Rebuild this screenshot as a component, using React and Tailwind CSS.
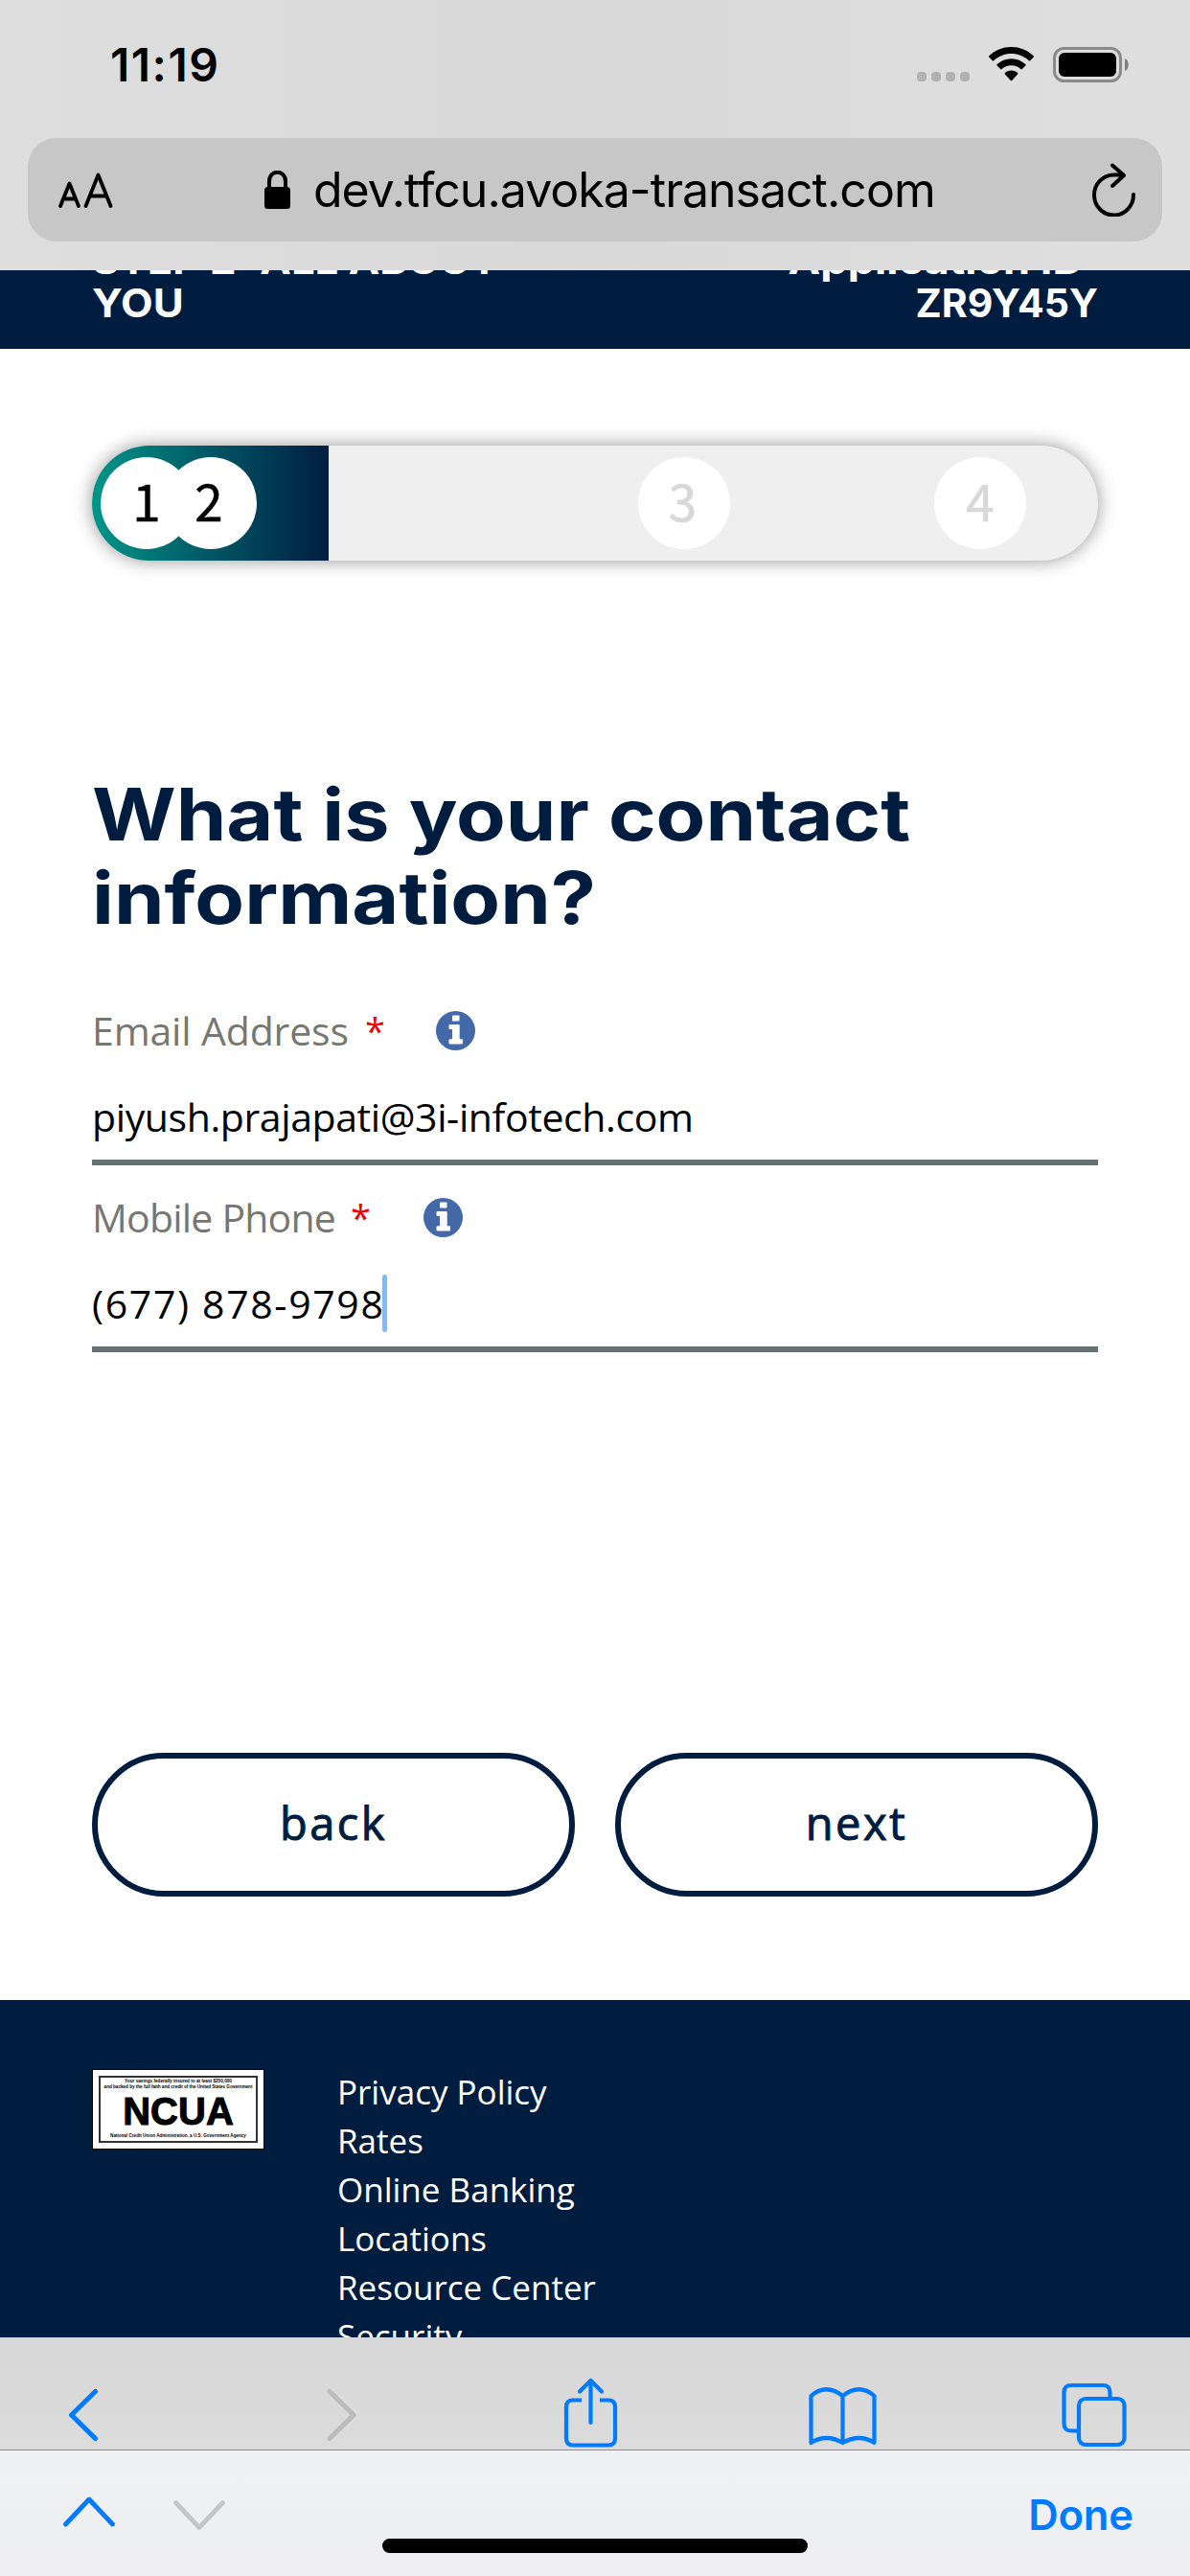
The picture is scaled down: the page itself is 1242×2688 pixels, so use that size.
const links = ["Privacy Policy", "Rates", "Online Banking", "Locations", "Resource Center", "Security"];

function StatusBar() {
  return (
    <div className="flex h-[144px] items-start justify-between pl-[115px] pr-[63px]">
      <div className="mt-[38px] text-[48px] leading-[60px] font-semibold tracking-[1.5px]">11:19</div>
      <div className="mt-[49px] flex h-[37px] items-start">
        <div className="mt-[26px] mr-[20px] flex gap-[5px]">
          {[0, 1, 2, 3].map((i) => (
            <span key={i} className="h-[10px] w-[10px] rounded-[4px] bg-[#b1b1b1]" />
          ))}
        </div>
        <svg className="mr-[20px] h-[36px] w-[47px]" viewBox="0 0 47 36">
          <path d="M23.5 0C32.5 0 40.5 3.4 46.6 9.2a1 1 0 0 1 0 1.5l-3.4 3.5a1 1 0 0 1-1.4 0C36.900 9.700 30.500 7 23.500 7S10.100 9.700 5.200 14.200a1 1 0 0 1-1.400 0L.4 10.700a1 1 0 0 1 0-1.500C6.500 3.400 14.500 0 23.500 0z" />
          <path d="M23.500 12.300c5.700 0 10.900 2.200 14.800 5.800a1 1 0 0 1 0 1.500l-3.500 3.500a1 1 0 0 1-1.400 0c-2.600-2.400-6.100-3.800-9.900-3.800s-7.300 1.400-9.900 3.800a1 1 0 0 1-1.400 0l-3.500-3.500a1 1 0 0 1 0-1.500c3.900-3.600 9.100-5.800 14.800-5.800z" />
          <path d="M23.500 24.600c2.500 0 4.700.9 6.500 2.300a1 1 0 0 1 .1 1.500l-5.900 6.700a1 1 0 0 1-1.400 0l-5.900-6.700a1 1 0 0 1 .1-1.500c1.800-1.400 4-2.300 6.500-2.300z" />
        </svg>
        <svg className="h-[37px] w-[80px]" viewBox="0 0 80 37">
          <rect x="1.500" y="1.500" width="69" height="34" rx="10" fill="none" stroke="#8a8a8a" strokeWidth="3" />
          <rect x="6" y="6" width="60" height="25" rx="6" />
          <path d="M75 12c5 2 5 11 0 13z" fill="#808080" />
        </svg>
      </div>
    </div>
  );
}

function AddressBar() {
  return (
    <div className="mx-[29px] flex h-[108px] items-center rounded-[30px] bg-[#c7c7c7] pl-[31px] pr-[27px]">
      <svg className="h-[40px] w-[60px]" viewBox="0 0 60 40" fill="none" stroke="#000" strokeWidth="3.800" strokeLinecap="round" strokeLinejoin="round">
        <path d="M3 37L12.500 13.500L22 37M6 29.500H19M29.500 37L42.500 4.500L55.500 37M34 26.500H51" />
      </svg>
      <svg className="ml-[156px] h-[40px] w-[28px]" viewBox="0 0 28 40">
        <rect y="17" width="27" height="23" rx="3.500" />
        <path d="M5 19V11.500C5 -1.500 22 -1.500 22 11.500V19" fill="none" stroke="#000" strokeWidth="4" />
      </svg>
      <div className="ml-[23px] w-[670px] text-[50px] leading-[60px] whitespace-nowrap tracking-[-1px]">dev.tfcu.avoka-transact.com</div>
      <svg className="ml-auto h-[56px] w-[46px]" viewBox="0 0 46 56" fill="none" stroke="#000" strokeWidth="4" strokeLinecap="round" strokeLinejoin="round">
        <path d="M43 33A20.500 21 0 1 1 22.500 12.500H32M21 2.500L33 13L21 24" />
      </svg>
    </div>
  );
}

function Step({ n, className }) {
  return (
    <div className={"flex h-[96px] w-[96px] items-center justify-center rounded-full bg-white text-[53px] leading-[60px] " + className}>
      <span className="mt-[-8px]">{n}</span>
    </div>
  );
}

function Progress() {
  return (
    <div className="mt-[101px] flex h-[120px] rounded-full bg-[#efefef] font-['Noto_Sans_CJK_JP',sans-serif] shadow-[0_0_19px_rgba(0,0,0,0.42)]">
      <div className="flex w-[247px] items-center rounded-l-full rounded-r-[3px] bg-linear-to-r from-[#009688] to-[#001d40] pl-[9px]">
        <Step n="1" className="[-webkit-text-stroke:0.5px_#000]" />
        <Step n="2" className="ml-[-29px] pr-[4px] [-webkit-text-stroke:0.5px_#000]" />
      </div>
      <div className="flex items-center text-[#d8d8d8]">
        <Step n="3" className="ml-[323px] pr-[3px] [-webkit-text-stroke:0.7px_#d8d8d8]" />
        <Step n="4" className="ml-[213px] [-webkit-text-stroke:0.7px_#d8d8d8]" />
      </div>
    </div>
  );
}

function InfoIcon({ className }) {
  return (
    <svg className={"h-[41px] w-[41px] " + className} viewBox="0 0 41 41">
      <circle cx="20.500" cy="20.500" r="20.500" fill="#4369a9" />
      <rect x="17" y="4.500" width="7.500" height="6" rx="0.800" fill="#fff" />
      <path d="M14.500 14H23.700Q24.700 14 24.700 15V29.300H27Q28 29.300 28 30.300V33.500Q28 34.500 27 34.500H14.500Q13.500 34.500 13.500 33.500V30.300Q13.500 29.300 14.500 29.300H17V19H14.500Q13.500 19 13.500 18V15Q13.500 14 14.500 14Z" fill="#fff" />
    </svg>
  );
}

function Field({ label, labelClass, value, valueClass, gap, caret }) {
  return (
    <div className="h-[195px]">
      <div className="flex h-[60px] items-center text-[41px] leading-[60px]">
        <span className={"text-[#777771] whitespace-nowrap " + labelClass}>{label}</span>
        <span className="w-[18px] text-[38px] text-[#f00000]">*</span>
        <InfoIcon className={gap} />
      </div>
      <div className="mt-[30px] flex h-[81px] items-start border-b-[6px] border-[#647071] text-[41px] leading-[60px]">
        <span className={"whitespace-nowrap " + valueClass}>{value}</span>
        {caret && <span className="h-[60px] w-[5px] rounded-full bg-[#7fb9ff]" />}
      </div>
    </div>
  );
}

function Badge() {
  return (
    <div className="mt-[72px] h-[84px] w-[180px] border border-black bg-white p-[6px] font-['Liberation_Sans',sans-serif] text-black">
      <div className="flex h-full flex-col items-center overflow-hidden border-2 border-[#333] whitespace-nowrap">
        <div className="mt-px text-[4.700px] leading-[6px] font-bold">Your savings federally insured to at least $250,000</div>
        <div className="text-[4.700px] leading-[6px] font-bold tracking-[-0.05px]">and backed by the full faith and credit of the United States Government</div>
        <div className="mt-[3px] text-[40px] leading-[38px] font-bold [-webkit-text-stroke:1px_#000]">NCUA</div>
        <div className="mt-[4px] text-[4.600px] leading-[6px] font-bold">National Credit Union Administration, a U.S. Government Agency</div>
      </div>
    </div>
  );
}

function Toolbar() {
  return (
    <div className="flex h-[117px] shrink-0 items-start bg-linear-to-b from-[#d7d7d7] to-[#dcdcdc] pl-[71px] text-[#007aff]">
      <svg className="mt-[53px] h-[56px] w-[32px]" viewBox="0 0 32 56" fill="none" stroke="currentColor" strokeWidth="5" strokeLinecap="round" strokeLinejoin="round"><path d="M28.500 3.500L3.500 28L28.500 52.500" /></svg>
      <svg className="mt-[53px] ml-[238px] h-[56px] w-[32px]" viewBox="0 0 32 56" fill="none" stroke="#bbb" strokeWidth="5" strokeLinecap="round" strokeLinejoin="round"><path d="M3 3.500L28 28L3 52.500" /></svg>
      <svg className="mt-[42px] ml-[214px] h-[74px] w-[58px]" viewBox="0 0 58 74" fill="none" stroke="currentColor" strokeWidth="4.200" strokeLinecap="round" strokeLinejoin="round">
        <path strokeLinecap="butt" d="M20 23.500H11Q4 23.500 4 30.500V63.500Q4 70.500 11 70.500H48Q55 70.500 55 63.500V30.500Q55 23.500 48 23.500H39" />
        <path d="M29.500 47V3M18 14.500L29.500 3L41 14.500" />
      </svg>
      <svg className="mt-[50px] ml-[199px] h-[64px] w-[71px]" viewBox="0 0 71 64" fill="none" stroke="currentColor" strokeWidth="4.200" strokeLinecap="round" strokeLinejoin="round">
        <path d="M2.500 11Q18 -2.500 35.500 11Q53 -2.500 68.500 11V60Q53 50 35.500 60Q18 50 2.500 60ZM35.500 11V60" />
      </svg>
      <svg className="mt-[47px] ml-[193px] h-[69px] w-[68px]" viewBox="0 0 68 69" fill="none" stroke="currentColor" strokeWidth="4.200">
        <path d="M17 50.500H10Q2.500 50.500 2.500 43V10.500Q2.500 3 10 3H43Q50.500 3 50.500 10.500V16" />
        <rect x="18" y="17" width="47.500" height="48" rx="7" />
      </svg>
    </div>
  );
}

function KeyboardBar() {
  return (
    <div className="h-[132px] shrink-0 border-t border-[#8b8b90] bg-linear-to-b from-[#eff1f1] to-[#eeeef2]">
      <div className="flex h-[91px] items-start pl-[65px] text-[#007aff]">
        <svg className="mt-[48px] h-[34px] w-[56px]" viewBox="0 0 56 34" fill="none" stroke="currentColor" strokeWidth="4.800" strokeLinecap="round" strokeLinejoin="round"><path d="M3.500 29L28 3L52.500 29" /></svg>
        <svg className="mt-[51px] ml-[59px] h-[34px] w-[56px]" viewBox="0 0 56 34" fill="none" stroke="#c6c6c8" strokeWidth="4.800" strokeLinecap="round" strokeLinejoin="round"><path d="M3.500 3.500L28 29.500L52.500 3.500" /></svg>
        <div className="mt-[37px] ml-auto mr-[59px] text-[43.500px] leading-[60px] font-semibold tracking-[-0.1px]">Done</div>
      </div>
      <div className="mx-auto mt-px h-[15px] w-[444px] rounded-full bg-black" />
    </div>
  );
}

export default function App() {
  return (
    <div className="flex h-[2688px] w-[1242px] flex-col overflow-hidden bg-white font-['Inter',sans-serif] text-black">
      <header className="h-[282px] shrink-0 bg-linear-to-r from-[#dedede] via-[#d9d9d9] to-[#dfdfdf]">
        <StatusBar />
        <AddressBar />
      </header>
      <div className="flex h-[82px] shrink-0 items-end justify-between overflow-hidden bg-[#001d40] px-[96px] pb-[25px] text-[41px] leading-[45px] font-bold whitespace-nowrap text-white">
        <div className="origin-left scale-x-[1.065]">STEP 2: ALL ABOUT<br />YOU</div>
        <div className="flex flex-col items-end">
          <span className="origin-right scale-x-[1.1]">Application ID:</span>
          <span>ZR9Y45Y</span>
        </div>
      </div>
      <main className="h-[1723px] shrink-0 px-[96px]">
        <Progress />
        <h1 className="mt-[221px] origin-left scale-x-[1.127] text-[75px] leading-[87px] font-bold whitespace-nowrap text-[#001d40]">What is your contact<br />information?</h1>
        <div className="mt-[65px] font-['Open_Sans',sans-serif]">
          <Field label="Email Address" labelClass="w-[285px] tracking-[-0.15px]" value="piyush.prajapati@3i-infotech.com" valueClass="tracking-[-0.4px]" gap="ml-[56px]" />
          <Field label="Mobile Phone" labelClass="w-[270px] tracking-[-0.8px]" value="(677) 878-9798" valueClass="w-[303px] tracking-[1.65px]" gap="ml-[58px]" caret />
        </div>
        <div className="mt-[394px] flex gap-[42px] font-['Open_Sans',sans-serif] text-[47px] leading-[60px] tracking-[2.500px] text-[#001d40] [-webkit-text-stroke:1px_#001d40]">
          <button className="h-[150px] flex-1 rounded-full border-6 border-[#001d40] pb-[5px]">back</button>
          <button className="h-[150px] flex-1 rounded-full border-6 border-[#001d40] pb-[5px]">next</button>
        </div>
      </main>
      <footer className="flex h-[352px] shrink-0 overflow-hidden bg-[#001d40] pl-[96px] font-['Open_Sans',sans-serif] text-white">
        <Badge />
        <ul className="mt-[70px] ml-[76px] text-[35px] leading-[51px]">
          {links.map((l) => <li key={l}>{l}</li>)}
        </ul>
      </footer>
      <Toolbar />
      <KeyboardBar />
    </div>
  );
}
